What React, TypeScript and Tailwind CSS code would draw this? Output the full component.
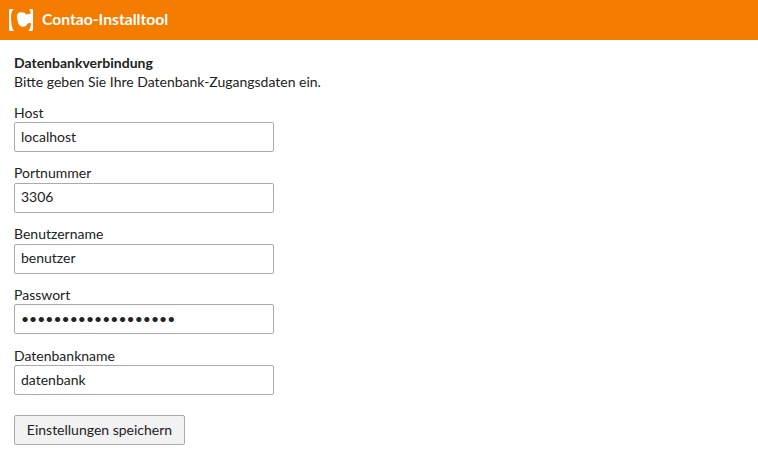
import React from "react";

const fields = [
  { id: "host", label: "Host", type: "text", value: "localhost" },
  { id: "port", label: "Portnummer", type: "text", value: "3306" },
  { id: "user", label: "Benutzername", type: "text", value: "benutzer" },
  { id: "password", label: "Passwort", type: "password", value: "geheimespasswort123" },
  { id: "name", label: "Datenbankname", type: "text", value: "datenbank" },
];

function Logo() {
  return (
    <svg className="h-6 w-6" viewBox="0 0 24 24" fill="#fff">
      <path d="M1.300 1H4.500C2.900 3.200 2 5.500 2 8.500C2 14 2.600 19.500 4.800 22.900H1.300Q0 22.900 0 21.600V2.300Q0 1 1.300 1Z" />
      <path d="M20.300 1H22.700Q24 1 24 2.300V14.500L18.600 15.600C17.600 18 15.600 19.300 13 18.700C10 18 9.200 15.500 8.600 12.500L7.900 9.500C7.600 6.700 8.600 4.700 11.700 4.300C14.300 3.900 16 4.700 17 6.500L21.800 5.400C21.600 3.500 21 2.100 20.300 1Z" />
      <path d="M24 14V21.600Q24 22.900 22.700 22.900H19.300C21.200 20.800 22 18 22 14.800Z" />
    </svg>
  );
}

export default function App() {
  return (
    <div className="min-h-[461px] bg-white font-['Lato',sans-serif] text-sm text-[#222]">
      <header className="flex h-10 items-center gap-[9px] bg-[#f47c00] px-[9px] text-white">
        <Logo />
        <h1 className="pb-0.5 text-[15.7px] font-bold">Contao-Installtool</h1>
      </header>
      <main className="px-3.5 pt-[13px]">
        <h2 className="leading-5 font-bold">Datenbankverbindung</h2>
        <p className="leading-[18px]">Bitte geben Sie Ihre Datenbank-Zugangsdaten ein.</p>
        <form className="pt-[13px]">
          {fields.map((field) => (
            <div key={field.id} className="mb-[12.75px] flex flex-col">
              <label htmlFor={field.id} className="-mt-[0.3px] h-[18.3px] leading-[17px]">{field.label}</label>
              <input id={field.id} type={field.type} defaultValue={field.value} className="h-[30px] w-[260px] rounded-[2px] border border-[#aaa] px-1.5 pb-0.5" />
            </div>
          ))}
          <button type="button" className="mt-[7.25px] h-[30px] w-[171px] rounded-[2px] border border-[#aaa] bg-[#f2f2f2] pb-px">Einstellungen speichern</button>
        </form>
      </main>
    </div>
  );
}
